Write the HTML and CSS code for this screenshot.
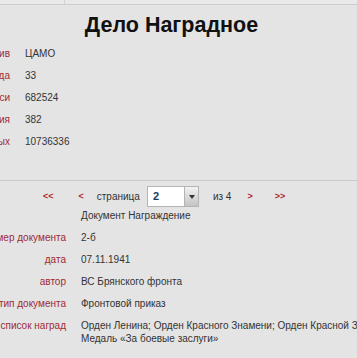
FILE: index.html
```html
<!doctype html>
<html lang="ru">
<head>
    <meta charset="UTF-8">
    <title>Дело Наградное</title>
    <link rel="stylesheet" href="styles.css">
</head>
<body>

<div class="topbar"><div class="topbar-cell"></div></div>

<h1 class="title">Дело Наградное</h1>

<dl class="info">
    <dt>архив</dt><dd>ЦАМО</dd>
    <dt>номер фонда</dt><dd>33</dd>
    <dt>номер описи</dt><dd>682524</dd>
    <dt>единица хранения</dt><dd>382</dd>
    <dt>количество награжденных</dt><dd>10736336</dd>
</dl>

<div class="divider"></div>

<div class="pager">
    <a href="javascript:;" class="arrow first">&lt;&lt;</a>
    <a href="javascript:;" class="arrow prev">&lt;</a>
    <span class="pager-label">страница</span>
    <span class="pager-select">
        <span class="pager-value">2</span>
        <span class="pager-btn"><em></em></span>
    </span>
    <span class="pager-total">из 4</span>
    <a href="javascript:;" class="arrow next">&gt;</a>
    <a href="javascript:;" class="arrow last">&gt;&gt;</a>
</div>

<dl class="doc">
    <dt></dt><dd>Документ Награждение</dd>
    <dt>номер документа</dt><dd>2-б</dd>
    <dt>дата</dt><dd>07.11.1941</dd>
    <dt>автор</dt><dd>ВС Брянского фронта</dd>
    <dt>тип документа</dt><dd>Фронтовой приказ</dd>
    <dt>список наград</dt><dd>Орден Ленина; Орден Красного Знамени; Орден Красной Звезды; Медаль «За боевые заслуги»</dd>
</dl>

</body>
</html>
```

FILE: styles.css
```css
*{
    margin: 0;
    padding: 0;
}
html,body{
    width: 100%;
    height: 100%;
    overflow: hidden;
}
body{
    background-color: #e4e4e4;
    font-family: "Liberation Sans", Arial, sans-serif;
    font-size: 10px;
    color: #333;
}
a{
    text-decoration: none;
}

.topbar{
    height: 4px;
    background-color: #e9e9e9;
    border-bottom: 1px solid #cdcdcd;
}
.topbar-cell{
    width: 64px;
    height: 4px;
    border-right: 1px solid #d2d2d2;
}

.title{
    margin: 8px 14px 0 0;
    font-size: 21.5px;
    line-height: 25px;
    font-weight: bold;
    color: #111;
    text-align: center;
}

/* top block, labels cut by the left edge */
.info{
    display: grid;
    grid-template-columns: 150px auto;
    column-gap: 15px;
    margin: 5px 0 0 -140px;
    line-height: 22px;
}
.info dt,
.doc dt{
    text-align: right;
    color: #9e2b36;
    white-space: nowrap;
}

.divider{
    margin-top: 27px;
    border-top: 1px solid #cbcbcb;
}

.pager{
    display: flex;
    align-items: center;
    height: 16px;
    margin-top: 7px;
    padding-left: 43px;
    white-space: nowrap;
}
.arrow{
    color: #b0262f;
    font-weight: bold;
    font-size: 9px;
}
.first{
    margin-right: 25px;
}
.prev{
    margin-right: 13px;
}
.pager-label{
    margin-right: 7px;
}
.pager-select{
    display: flex;
    width: 52px;
    height: 21px;
    box-sizing: border-box;
    border: 1px solid #b4b4b4;
    margin-right: 14px;
    background: #fff;
}
.pager-value{
    flex: 1;
    padding-left: 5px;
    line-height: 19px;
    color: #1b3a5c;
    font-weight: bold;
    font-size: 11px;
}
.pager-btn{
    position: relative;
    width: 13px;
    border-left: 1px solid #b4b4b4;
    background: linear-gradient(#f2f2f2, #c4c4c4);
}
.pager-btn em{
    position: absolute;
    left: 4px;
    top: 8px;
    border-left: 3px solid transparent;
    border-right: 3px solid transparent;
    border-top: 4px solid #333;
}
.pager-total{
    margin-right: 16px;
}
.next{
    margin-right: 22px;
}

.doc{
    display: grid;
    grid-template-columns: 150px 330px;
    column-gap: 15px;
    margin: 0 0 0 -84px;
    line-height: 13px;
}
.doc dt,
.doc dd{
    padding: 5px 0 4px;
}
```
